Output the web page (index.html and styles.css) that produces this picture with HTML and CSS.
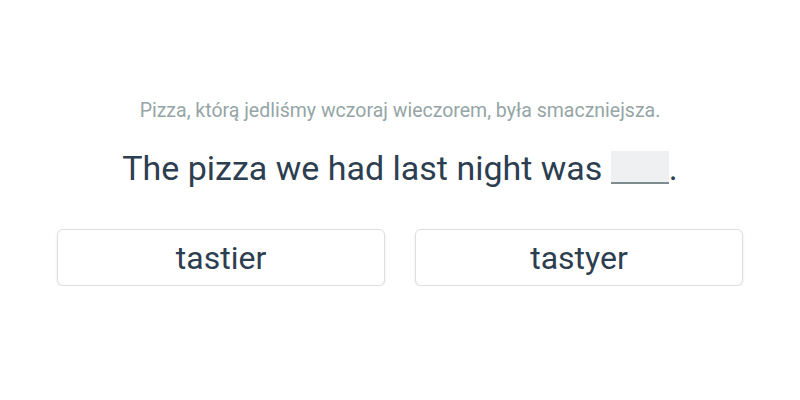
FILE: index.html
```html
<!DOCTYPE html>
<html lang="en">
  <head>
    <meta charset="UTF-8" />
    <meta name="viewport" content="width=device-width, initial-scale=1.0" />
    <title>Fill the gap</title>
    <link rel="stylesheet" href="styles.css">
  </head>
  <body>
    <div class="exercise">
      <p class="hint">Pizza, którą jedliśmy wczoraj wieczorem, była smaczniejsza.</p>
      <p class="sentence">The pizza we had last night was <span class="gap"></span>.</p>
      <div class="options">
        <button class="option">tastier</button>
        <button class="option">tastyer</button>
      </div>
    </div>
  </body>
</html>
```

FILE: styles.css
```css
body {
  font-family: Roboto, "Noto Sans", sans-serif;
  background-color: #fff;
  margin: 0;
  padding: 0;
}
.exercise {
  padding: 98px 57px 0;
}
.hint {
  margin: 0;
  text-align: center;
  font-size: 19.5px;
  line-height: 26px;
  color: #95a5a6;
}
.sentence {
  margin: 19px 0 0;
  text-align: center;
  font-size: 34px;
  line-height: 50px;
  color: #2c3e50;
}
.gap {
  display: inline-block;
  width: 58px;
  height: 31px;
  vertical-align: -4px;
  background-color: #eef0f2;
  border-bottom: 2px solid #7f8c8d;
}
.options {
  display: grid;
  grid-template-columns: 1fr 1fr;
  gap: 30px;
  margin-top: 36px;
}
.option {
  height: 57px;
  font-family: inherit;
  font-size: 32px;
  color: #2c3e50;
  background-color: #fff;
  border: 1px solid #dcdfe2;
  border-radius: 6px;
  box-shadow: 0 1px 3px rgba(0, 0, 0, 0.08);
  cursor: pointer;
}
```
